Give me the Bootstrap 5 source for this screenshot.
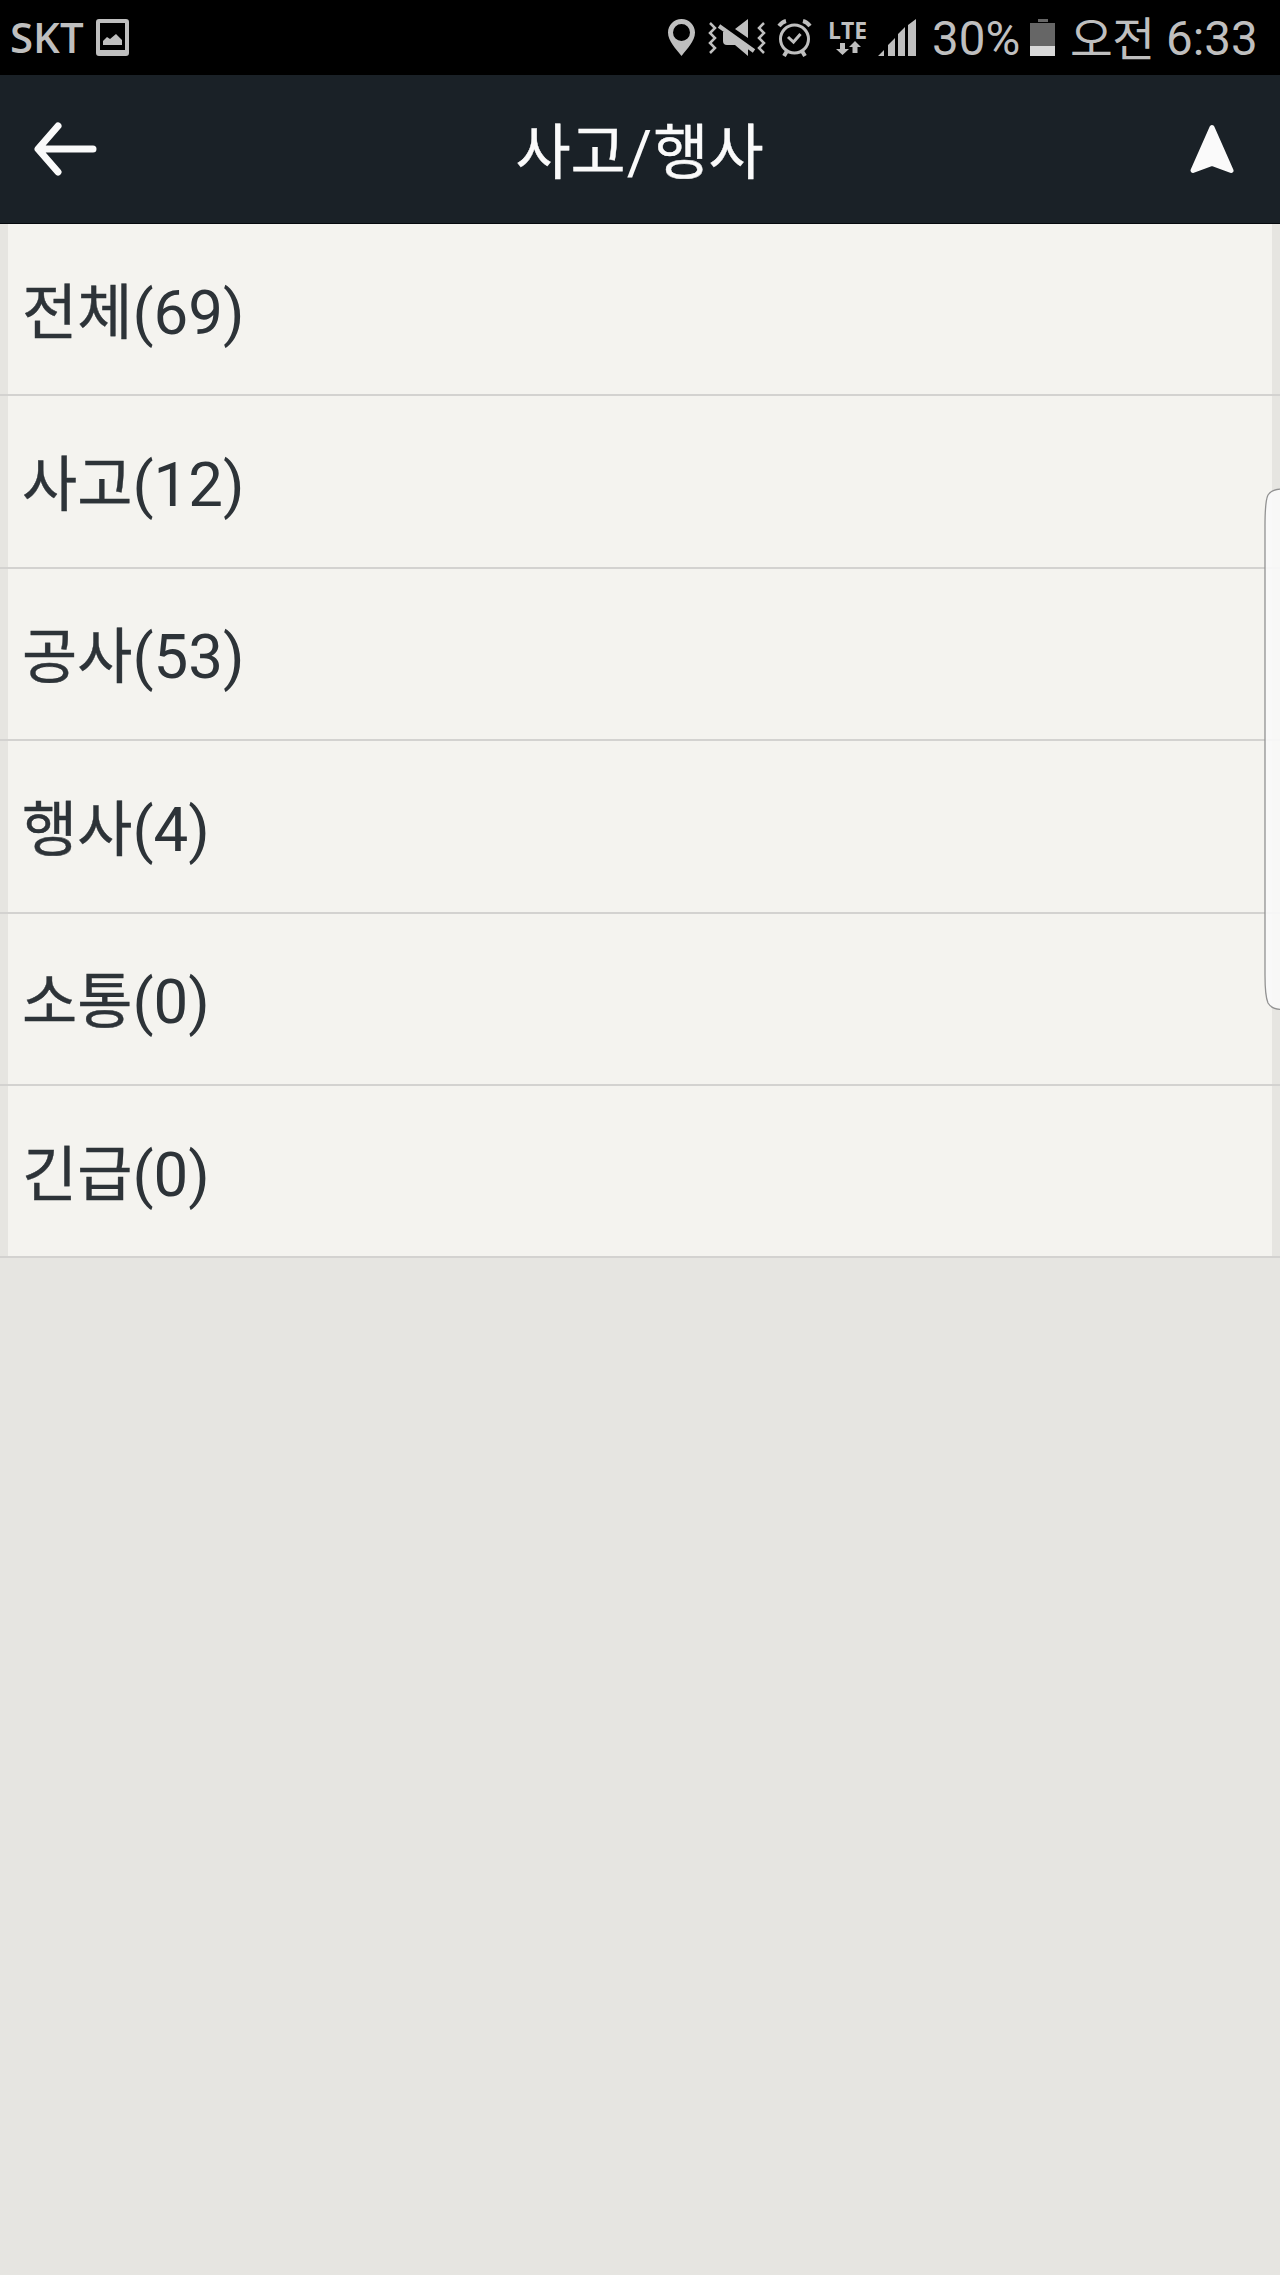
<!DOCTYPE html>
<html lang="ko">
<head>
<meta charset="utf-8">
<meta name="viewport" content="width=device-width, initial-scale=1">
<title>사고/행사</title>
<link href="https://cdn.jsdelivr.net/npm/bootstrap@5.3.0/dist/css/bootstrap.min.css" rel="stylesheet">
<style>
body{background:#e6e5e1;color:#2d3338;font-family:Roboto,"Noto Sans CJK KR",sans-serif;min-height:2275px;overflow-x:hidden}
svg{display:block;flex:none}
.statusbar{height:75px;background:#000;color:#bfbfbf;font-size:47.5px;line-height:75px;white-space:nowrap;padding-left:10px;padding-right:25px}
.statusbar span{flex:none}
.carrier{font-family:"Open Sans",sans-serif;font-weight:600;font-size:42px;width:86px;line-height:72px;padding-bottom:2px}
.pct,.clock{padding-top:3px}
.pct{width:97px}
.ampm{width:96px;font-size:46.5px;letter-spacing:-.6px;padding-top:5px}
.clock{width:89px}
.net{width:48px;font:700 23px/22px "Open Sans",sans-serif}
.net span{margin-left:-1px}
.titlebar{height:149px;background:#1a2127;border-bottom:1px solid #05090d;color:#fafafa;padding:0 45px 0 34px}
.titlebar h1{font-size:61.5px;line-height:80px;font-weight:400;padding:8px 8px 0 0}
.titlebar i{font-style:normal;padding:0 1px}
.menu{--bs-list-group-bg:transparent}
.entry{height:172.4px;border:0;border-bottom:2px solid #d3d2d0;padding:7px 0 0 22px;background:linear-gradient(90deg,#e6e5e1 8px,#f4f3ef 8px,#f4f3ef 1272px,#e6e5e1 1272px);font-size:61.8px;line-height:80px;color:#2d3338}
.ko{font-size:60px;-webkit-text-stroke:.4px currentColor}
.entry .ko{padding-top:2px}
.edge{position:absolute;top:488px;right:0}
</style>
<script src="https://cdn.jsdelivr.net/npm/bootstrap@5.3.0/dist/js/bootstrap.bundle.min.js"></script>
</head>
<body class="position-relative">
<div class="statusbar d-flex align-items-center">
<span class="carrier">SKT</span>
<svg width="33" height="37" viewBox="0 0 33 37"><path fill="#bfbfbf" fill-rule="evenodd" d="M3 0h27q3 0 3 3v31q0 3-3 3H3q-3 0-3-3V3q0-3 3-3zM4 4v27h25V4z"/><path fill="#bfbfbf" d="M7 26v-4l4-4 3 2 6-5 6 6v5z"/></svg>
<div class="d-flex align-items-center ms-auto">
<svg width="41" height="38" viewBox="0 0 41 38"><path fill="#bfbfbf" fill-rule="evenodd" d="M14.500 0C7 0 1 6 1 13.500 1 22 9 30 14.500 37 20 30 28 22 28 13.500 28 6 22 0 14.500 0zM14.500 5a8.500 8.500 0 1 1 0 17 8.500 8.500 0 0 1 0-17z"/></svg>
<svg width="69" height="38" viewBox="-1 0 69 38"><g fill="none" stroke="#bfbfbf" stroke-width="2.500"><path d="M1 4l5 5-5 5 5 5-5 5 5 5-5 5M55 4l-5 5 5 5-5 5 5 5-5 5 5 5"/></g><path fill="#bfbfbf" d="M39 0v19L26 10zM14 13h3l22 16v8L26 26h-8q-4 0-4-4z"/><path stroke="#bfbfbf" stroke-width="4" d="M10 7l35 25"/></svg>
<svg width="52" height="38" viewBox="-1 0 52 38"><g fill="none" stroke="#bfbfbf" stroke-width="3"><circle cx="16.500" cy="20" r="14"/><path d="M10 18l5.500 5 7-8"/><path stroke-width="4" d="M1 7Q4 3 8 2M32 7Q29 3 25 2M9 32l-3 5M24 32l3 5"/></g></svg>
<div class="net d-flex flex-column"><span>LTE</span><svg width="40" height="15" viewBox="0 0 40 15"><path fill="#bfbfbf" d="M11 2h5v6h4l-6.500 6L7 8h4zM23.500 12V6H20l6-6 6 6h-3.500v6z"/></svg></div>
<svg width="55" height="38" viewBox="-1 0 55 38"><path fill="#bfbfbf" d="M0 37l6-6v6zM10 37V26l7-7v18zM20 37V15l7-7v29zM30 37V6l8-6v37z"/></svg>
<span class="pct">30%</span>
<svg width="41" height="37" viewBox="-1 0 41 37"><path fill="#666" d="M8 0h10v3H8zM0 4h25v23H0z"/><path fill="#d8d8d8" d="M0 27h25v10H0z"/></svg>
<span class="ampm">오전</span><span class="clock">6:33</span>
</div>
</div>
<header class="titlebar d-flex align-items-center justify-content-between">
<svg width="64" height="54" viewBox="0 0 64 54"><path fill="none" stroke="#fafafa" stroke-width="7" stroke-linecap="round" stroke-linejoin="round" d="M24 4L4 27l20 23M5 27h54"/></svg>
<h1 class="m-0"><span class="ko">사고</span><i>/</i><span class="ko">행사</span></h1>
<svg width="46" height="50" viewBox="0 0 46 50"><path fill="#fafafa" stroke="#fafafa" stroke-width="5" stroke-linejoin="round" d="M23 3.500L42 46.500 23 39.500 4 46.500z"/></svg>
</header>
<main class="list-group menu rounded-0">
<div class="list-group-item entry d-flex align-items-center"><span class="ko">전체</span>(69)</div>
<div class="list-group-item entry d-flex align-items-center"><span class="ko">사고</span>(12)</div>
<div class="list-group-item entry d-flex align-items-center"><span class="ko">공사</span>(53)</div>
<div class="list-group-item entry d-flex align-items-center"><span class="ko">행사</span>(4)</div>
<div class="list-group-item entry d-flex align-items-center"><span class="ko">소통</span>(0)</div>
<div class="list-group-item entry d-flex align-items-center rounded-0"><span class="ko">긴급</span>(0)</div>
</main>
<svg class="edge" width="16" height="523" viewBox="0 0 16 523"><path fill="#fafafa" fill-opacity=".9" stroke="#929292" stroke-width="1.300" d="M18 1Q8 1 4 7Q1 13 1 38V487Q1 508 4 515Q8 521.500 18 521.500"/></svg>
</body>
</html>
